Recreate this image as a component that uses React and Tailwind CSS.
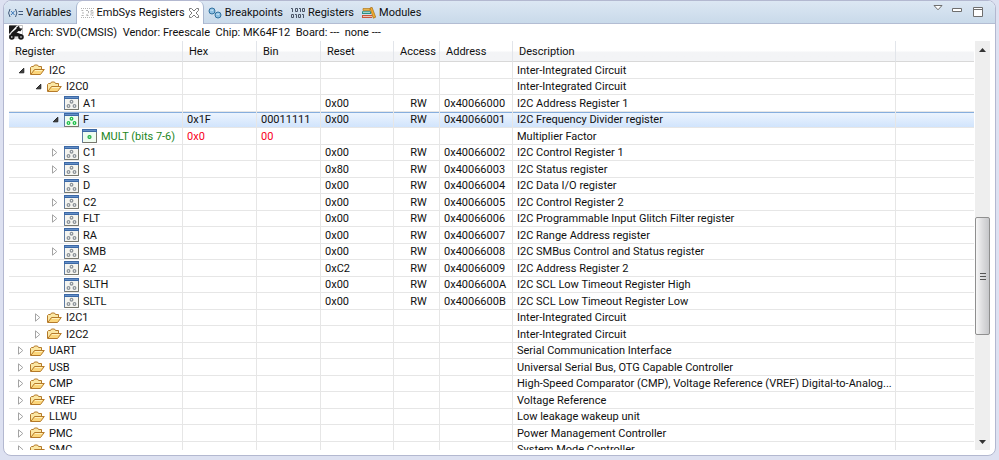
import { useState } from 'react';
import clsx from 'clsx';

const BOARD_INFO = 'Arch: SVD(CMSIS)  Vendor: Freescale  Chip: MK64F12  Board: ---  none ---';

const REGISTERS = [
  { name: 'I2C', level: 0, kind: 'folder', open: true, description: 'Inter-Integrated Circuit' },
  { name: 'I2C0', level: 1, kind: 'folder', open: true, description: 'Inter-Integrated Circuit' },
  { name: 'A1', level: 2, kind: 'register', leaf: true, reset: '0x00', access: 'RW', address: '0x40066000', description: 'I2C Address Register 1' },
  { name: 'F', level: 2, kind: 'active', open: true, hex: '0x1F', bin: '00011111', reset: '0x00', access: 'RW', address: '0x40066001', description: 'I2C Frequency Divider register' },
  { name: 'MULT (bits 7-6)', level: 3, kind: 'field', leaf: true, hex: '0x0', bin: '00', description: 'Multiplier Factor' },
  { name: 'C1', level: 2, kind: 'register', reset: '0x00', access: 'RW', address: '0x40066002', description: 'I2C Control Register 1' },
  { name: 'S', level: 2, kind: 'register', reset: '0x80', access: 'RW', address: '0x40066003', description: 'I2C Status register' },
  { name: 'D', level: 2, kind: 'register', leaf: true, reset: '0x00', access: 'RW', address: '0x40066004', description: 'I2C Data I/O register' },
  { name: 'C2', level: 2, kind: 'register', reset: '0x00', access: 'RW', address: '0x40066005', description: 'I2C Control Register 2' },
  { name: 'FLT', level: 2, kind: 'register', reset: '0x00', access: 'RW', address: '0x40066006', description: 'I2C Programmable Input Glitch Filter register' },
  { name: 'RA', level: 2, kind: 'register', leaf: true, reset: '0x00', access: 'RW', address: '0x40066007', description: 'I2C Range Address register' },
  { name: 'SMB', level: 2, kind: 'register', reset: '0x00', access: 'RW', address: '0x40066008', description: 'I2C SMBus Control and Status register' },
  { name: 'A2', level: 2, kind: 'register', leaf: true, reset: '0xC2', access: 'RW', address: '0x40066009', description: 'I2C Address Register 2' },
  { name: 'SLTH', level: 2, kind: 'register', leaf: true, reset: '0x00', access: 'RW', address: '0x4006600A', description: 'I2C SCL Low Timeout Register High' },
  { name: 'SLTL', level: 2, kind: 'register', leaf: true, reset: '0x00', access: 'RW', address: '0x4006600B', description: 'I2C SCL Low Timeout Register Low' },
  { name: 'I2C1', level: 1, kind: 'folder', description: 'Inter-Integrated Circuit' },
  { name: 'I2C2', level: 1, kind: 'folder', description: 'Inter-Integrated Circuit' },
  { name: 'UART', level: 0, kind: 'folder', description: 'Serial Communication Interface' },
  { name: 'USB', level: 0, kind: 'folder', description: 'Universal Serial Bus, OTG Capable Controller' },
  { name: 'CMP', level: 0, kind: 'folder', description: 'High-Speed Comparator (CMP), Voltage Reference (VREF) Digital-to-Analog...' },
  { name: 'VREF', level: 0, kind: 'folder', description: 'Voltage Reference' },
  { name: 'LLWU', level: 0, kind: 'folder', description: 'Low leakage wakeup unit' },
  { name: 'PMC', level: 0, kind: 'folder', description: 'Power Management Controller' },
  { name: 'SMC', level: 0, kind: 'folder', description: 'System Mode Controller' },
];

const INDENT = ['pl-[5px]', 'pl-[22px]', 'pl-[39px]', 'pl-[57px]'];

function VariablesIcon() {
  return (
    <svg width="15" height="12" viewBox="0 0 15 12" fill="none" stroke="#3f5878">
      <path d="M2 2Q-.8 6 2 10M7.500 2Q10.300 6 7.500 10" />
      <path d="M3 4L6.500 8M6.500 4L3 8" stroke="#3b78b8" />
      <path d="M10.500 4.500h4.500M10.500 7.500h4.500" />
    </svg>
  );
}

function EmbSysIcon() {
  return (
    <svg width="13" height="12" viewBox="0 0 13 12" fill="none" stroke="#b4b4b4">
      <path d="M0 1.500h13M0 10.500h13" strokeDasharray="1 1" />
      <path d="M.5 3.500h1.500v5M.5 8.500h3M5 3.500h2.500v2.500L5 8.500h3M10 3.500h2v5h-2zM10 6h2" strokeDasharray="2 1" />
    </svg>
  );
}

function BreakpointsIcon() {
  return (
    <svg width="14" height="12" viewBox="0 0 14 12">
      <circle cx="4" cy="4" r="3" fill="#8fc0e2" stroke="#31729f" />
      <circle cx="10" cy="8" r="3" fill="#8fc0e2" stroke="#31729f" />
      <path d="M2.500 4Q3.500 2 5 3.500M8.500 8Q9.500 6 11 7.500" fill="none" stroke="#d3ecfa" />
    </svg>
  );
}

function BinaryIcon() {
  return (
    <svg width="14" height="12" viewBox="0 0 14 12" fill="none" stroke="#4a5566">
      <path d="M0 1.500h1.500V5M4.500 1.500h2v3h-2zM8 1.500h1.500V5M11.500 1.500h2v3h-2z" />
      <path d="M.5 7.500h2v3h-2zM4 7.500h1.500V11M7.500 7.500h2v3h-2zM11 7.500h1.500V11" />
    </svg>
  );
}

function ModulesIcon() {
  return (
    <svg width="14" height="12" viewBox="0 0 14 12">
      <path d="M1 1.500h7v2H1z" fill="#e8b34b" stroke="#b27a1c" strokeWidth=".7" />
      <path d="M0 4.300h9v2.700H0z" fill="#2f8f80" />
      <path d="M1 5.500h7" stroke="#d5efe9" strokeWidth=".7" />
      <path d="M0 8h10v3H0z" fill="#c9553a" />
      <path d="M1 9.500h9" stroke="#f6dccf" strokeWidth=".8" />
      <path d="M8 1l2-.8 3.700 10-2.400 1z" fill="#f0ac2c" stroke="#a56b18" strokeWidth=".7" />
    </svg>
  );
}

function CloseIcon() {
  return (
    <svg width="10" height="10" viewBox="0 0 10 10" fill="#fff" stroke="#7c7c7c">
      <path d="M.5.5h2L5 3 7.500.5h2v2L7 5l2.500 2.500v2h-2L5 7 2.500 9.500h-2v-2L3 5 .5 2.500z" />
    </svg>
  );
}

function ToolIcon() {
  return (
    <svg width="15" height="15" viewBox="0 0 15 15">
      <path d="M1 .5h12.500V13H1z" fill="#fff" stroke="#9a9a9a" strokeWidth=".6" />
      <path d="M0 .5h8L0 9z" fill="#1a1a1a" />
      <path d="M3 9.500L9.500 4" stroke="#1a1a1a" strokeWidth="3" />
      <path d="M7.500 2.500L10 .8l.8 2.400 2.700.3-2 2.700-3.500-.5z" fill="#1a1a1a" />
      <path d="M2 9l4-2 3 1 4 1.500v2H2z" fill="#1a1a1a" />
      <circle cx="2.800" cy="12" r="1.800" fill="#fff" stroke="#1a1a1a" strokeWidth="2" />
      <circle cx="12" cy="12" r="1.800" fill="#fff" stroke="#1a1a1a" strokeWidth="2" />
    </svg>
  );
}

function FolderIcon() {
  return (
    <svg width="15" height="12" viewBox="0 0 15 12" stroke="#b57a2a" strokeLinejoin="round">
      <path d="M.5 10.500V3.500l1-1h2l1-1.500h3l1 1.500h3v3" fill="#fbe7a4" />
      <path d="M.8 10.500L4.500 5.500h9.800L10.500 10.500z" fill="#fbd67c" />
      <path d="M5 6.500h7" stroke="#fff1bf" />
    </svg>
  );
}

function RegisterIcon({ active }) {
  const dot = active ? '#1fc04a' : '#8d9499';
  return (
    <svg width="15" height="14" viewBox="0 0 15 14">
      <path d="M.5.5h14v13H.5z" fill={active ? '#effcf0' : '#f4f4ef'} stroke="#5d7ba3" />
      <path d="M0 0h15v3H0z" fill="#3c69a6" />
      <path d="M1 1.500h13" stroke="#6590c8" />
      <path d="M.5 13.500h14v-10" fill="none" stroke="#77776c" />
      <g fill="#fff" stroke={dot} strokeWidth="1.300">
        <circle cx="7.500" cy="5.700" r="1.300" />
        <circle cx="4.500" cy="10" r="1.300" />
        <circle cx="10.500" cy="10" r="1.300" />
      </g>
    </svg>
  );
}

function FieldIcon() {
  return (
    <svg width="15" height="14" viewBox="0 0 15 14">
      <path d="M.5.5h14v13H.5z" fill="#effcf0" stroke="#5d7ba3" />
      <path d="M0 0h15v3H0z" fill="#3c69a6" />
      <path d="M1 1.500h13" stroke="#6590c8" />
      <path d="M.5 13.500h14v-10" fill="none" stroke="#77776c" />
      <circle cx="7.500" cy="8" r="1.500" fill="#8fe3a3" stroke="#1fae44" strokeWidth="1.200" />
    </svg>
  );
}

function RowIcon({ kind }) {
  if (kind === 'folder') return <FolderIcon />;
  if (kind === 'field') return <FieldIcon />;
  return <RegisterIcon active={kind === 'active'} />;
}

function Twisty({ open, label }) {
  return (
    <button type="button" aria-label={label} aria-expanded={!!open} className="flex h-3 w-2 items-center">
      {open ? (
        <svg width="7" height="7" viewBox="0 0 7 7">
          <path d="M5.800 1.200V5.800H1.200z" fill="#404040" stroke="#262626" />
        </svg>
      ) : (
        <svg width="6" height="9" viewBox="0 0 6 9">
          <path d="M.5.8L4.800 4.500.5 8.200z" fill="#fff" stroke="#a3a3a3" />
        </svg>
      )}
    </button>
  );
}

function Tab({ icon, label, selected, closable, onSelect }) {
  return (
    <div
      className={clsx(
        'flex h-[23px] items-center px-1',
        selected && 'rounded-t-md border-x border-[#a9b7cf] bg-white'
      )}
    >
      <button
        type="button"
        role="tab"
        aria-selected={selected}
        onClick={onSelect}
        className="flex items-center gap-[3px] whitespace-nowrap"
      >
        {icon}
        {label}
      </button>
      {closable && (
        <button type="button" aria-label={`Close ${label}`} className="ml-1">
          <CloseIcon />
        </button>
      )}
    </div>
  );
}

function RegisterRow({ row, selected, onSelect }) {
  const isField = row.kind === 'field';
  return (
    <tr
      onClick={onSelect}
      aria-selected={selected}
      className={clsx(
        'odd:h-[17px] even:h-[16px] *:overflow-hidden *:text-ellipsis *:whitespace-nowrap *:border-r *:border-b *:border-[#e6e6e6] *:p-0 *:pl-1',
        selected && 'bg-linear-to-b from-[#eef5fe] to-[#cfe3fc] shadow-[inset_0_1px_0_#86aede]'
      )}
    >
      <td>
        <div className={clsx('flex h-[15px] items-center', INDENT[row.level])}>
          {row.leaf ? <span className="w-2" /> : <Twisty open={row.open} label={`Toggle ${row.name}`} />}
          <span className="ml-1 flex w-[15px] justify-center">
            <RowIcon kind={row.kind} />
          </span>
          <span className={clsx('ml-1', isField && 'text-[#1c861c]')}>{row.name}</span>
        </div>
      </td>
      <td className={clsx(isField && 'text-[#f8001c]')}>{row.hex}</td>
      <td className={clsx(isField && 'text-[#f8001c]')}>{row.bin}</td>
      <td>{row.reset}</td>
      <td className="text-center">{row.access}</td>
      <td>{row.address}</td>
      <td>{row.description}</td>
      <td className="border-r-0!" />
    </tr>
  );
}

function RegisterTable() {
  const [selected, setSelected] = useState('F');
  return (
    <div className="min-w-0 flex-1 overflow-hidden">
      <table className="w-full table-fixed border-separate border-spacing-0 text-left">
        <colgroup>
          <col className="w-[174px]" />
          <col className="w-[74px]" />
          <col className="w-[64px]" />
          <col className="w-[73px]" />
          <col className="w-[46px]" />
          <col className="w-[73px]" />
          <col className="w-[383px]" />
          <col />
        </colgroup>
        <thead>
          <tr className="h-[21px] bg-linear-to-b from-white from-45% to-[#f3f4f6] to-55% *:border-r *:border-b *:border-r-[#e2e5ea] *:border-b-[#d8d8d8] *:p-0 *:pl-1.5 *:font-normal">
            <th>Register</th>
            <th>Hex</th>
            <th>Bin</th>
            <th>Reset</th>
            <th>Access</th>
            <th>Address</th>
            <th>Description</th>
            <th className="border-r-0!" aria-label="Spacer" />
          </tr>
        </thead>
        <tbody>
          {REGISTERS.map((row) => (
            <RegisterRow
              key={row.name}
              row={row}
              selected={row.name === selected}
              onSelect={() => setSelected(row.name)}
            />
          ))}
        </tbody>
      </table>
    </div>
  );
}

function ScrollBar() {
  return (
    <div className="ml-px flex w-[15px] flex-col bg-[#eeeeee]">
      <button type="button" aria-label="Scroll up" className="flex h-[17px] items-center justify-center">
        <svg width="7" height="4" viewBox="0 0 7 4">
          <path d="M0 4L3.500 0 7 4z" fill="#333" />
        </svg>
      </button>
      <div className="flex-[159]" />
      <div className="flex flex-[117] flex-col items-center justify-center rounded-xs border border-[#8f8f8f] bg-linear-to-r from-[#f7f7f7] via-[#dcdcde] to-[#c6c7ca]">
        <svg width="6" height="8" viewBox="0 0 6 8" stroke="#555">
          <path d="M0 1.500h6M0 4.500h6M0 7.500h6" />
        </svg>
      </div>
      <div className="flex-[98]" />
      <button type="button" aria-label="Scroll down" className="flex h-[17px] items-center justify-center">
        <svg width="7" height="4" viewBox="0 0 7 4">
          <path d="M0 0L3.500 4 7 0z" fill="#333" />
        </svg>
      </button>
    </div>
  );
}

function ViewControls() {
  return (
    <div className="ml-auto flex gap-[9px] pt-1 pr-3">
      <button type="button" aria-label="View menu" className="flex h-2.5 items-start">
        <svg width="10" height="6" viewBox="0 0 10 6">
          <path d="M1 .5h8L5 4.800z" fill="#fff" stroke="#6e6e6e" />
        </svg>
      </button>
      <button type="button" aria-label="Minimize" className="flex h-2.5 items-center">
        <svg width="10" height="4" viewBox="0 0 10 4">
          <path d="M.5.5h9v3h-9z" fill="#fff" stroke="#6e6e6e" />
        </svg>
      </button>
      <button type="button" aria-label="Maximize" className="ml-0.5 flex pt-0.5">
        <svg width="10" height="10" viewBox="0 0 10 10">
          <path d="M.5.5h9v9h-9zM.5 2.500h9" fill="#fff" stroke="#6e6e6e" />
        </svg>
      </button>
    </div>
  );
}

const TABS = [
  { label: 'Variables', icon: <VariablesIcon /> },
  { label: 'EmbSys Registers', icon: <EmbSysIcon />, closable: true },
  { label: 'Breakpoints', icon: <BreakpointsIcon /> },
  { label: 'Registers', icon: <BinaryIcon /> },
  { label: 'Modules', icon: <ModulesIcon /> },
];

function App() {
  const [tab, setTab] = useState('EmbSys Registers');

  return (
    <div className="h-screen bg-[#dde1f1] px-[3px] pb-1 font-[Roboto,sans-serif] text-[11px] leading-[15px] text-[#101010]">
      <div className="flex h-full flex-col overflow-hidden rounded-lg border border-[#b3b8d0] bg-white">
        <div className="flex h-[23px] shrink-0 border-b border-[#b3bdd3] bg-linear-to-b from-[#dce7f3] to-[#c9daea]">
          <div role="tablist" className="flex">
            {TABS.map((t) => (
              <Tab key={t.label} {...t} selected={t.label === tab} onSelect={() => setTab(t.label)} />
            ))}
          </div>
          <ViewControls />
        </div>
        <div className="flex h-[17px] shrink-0 items-center gap-1 px-[5px]">
          <ToolIcon />
          <p className="whitespace-pre">{BOARD_INFO}</p>
        </div>
        <div className="flex min-h-0 flex-1 px-[5px] pb-[5px]">
          <RegisterTable />
          <ScrollBar />
        </div>
      </div>
    </div>
  );
}

export default App;
